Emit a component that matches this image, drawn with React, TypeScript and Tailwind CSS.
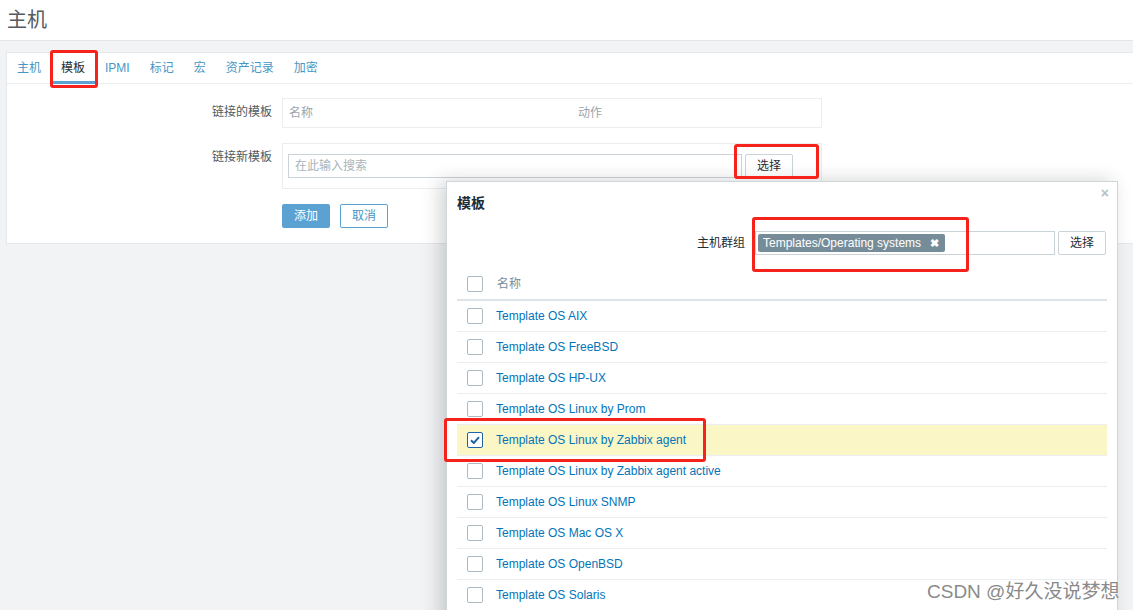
import React from 'react';

const FONT = { fontFamily: '"Liberation Sans", Arial, "Noto Sans CJK SC", sans-serif' };

const TABS = ['主机', '模板', 'IPMI', '标记', '宏', '资产记录', '加密'];

const TEMPLATES = [
  'Template OS AIX',
  'Template OS FreeBSD',
  'Template OS HP-UX',
  'Template OS Linux by Prom',
  'Template OS Linux by Zabbix agent',
  'Template OS Linux by Zabbix agent active',
  'Template OS Linux SNMP',
  'Template OS Mac OS X',
  'Template OS OpenBSD',
  'Template OS Solaris',
];

const Checkbox: React.FC<{ checked?: boolean }> = ({ checked }) => (
  <div
    className={`w-[16px] h-[16px] rounded-[2px] border bg-white flex items-center justify-center ${
      checked ? 'border-[#1f65a6]' : 'border-[#acbbc2]'
    }`}
  >
    {checked && (
      <svg width="10" height="8" viewBox="0 0 10 8">
        <path d="M1 4.2 L3.8 7 L9 1.2" fill="none" stroke="#1f65a6" strokeWidth="2" />
      </svg>
    )}
  </div>
);

const Annot: React.FC<{ className: string }> = ({ className }) => (
  <div className={`absolute border-[3px] border-[#f5231b] rounded-[3px] pointer-events-none ${className}`} />
);

const App: React.FC = () => {
  return (
    <div className="relative w-[1133px] h-[610px] overflow-hidden bg-[#f2f3f5] text-[12px] text-[#1f2c33]" style={FONT}>
      {/* Page header */}
      <div className="h-[41px] bg-white border-b border-[#e4e7ea] flex items-center pl-[7px]">
        <h1 className="text-[20px] text-[#555b60] font-normal leading-none">主机</h1>
      </div>

      {/* Main card */}
      <div className="mt-[11px] ml-[6px] w-[1140px] bg-white border border-[#e4e8eb] pb-[15px]">
        <div className="flex h-[31px] border-b border-[#ebeef0]">
          {TABS.map((t, i) => (
            <div
              key={t}
              className={`px-[10px] flex items-center relative ${i === 1 ? 'text-[#1f2c33]' : 'text-[#4796c4]'}`}
            >
              {t}
              {i === 1 && <div className="absolute left-[2px] right-0 bottom-[-1px] h-[3px] bg-[#5ba2d3]" />}
            </div>
          ))}
        </div>

        <div className="pt-[14px] flex flex-col gap-[15px]">
          <div className="flex">
            <div className="w-[275px] pr-[10px] text-right pt-[5px] text-[#4f5b62]">链接的模板</div>
            <div className="w-[540px] h-[30px] border border-[#ebeef0] flex items-center text-[#9aa5ab]">
              <span className="pl-[6px] w-[295px]">名称</span>
              <span>动作</span>
            </div>
          </div>

          <div className="flex">
            <div className="w-[275px] pr-[10px] text-right pt-[5px] text-[#4f5b62]">链接新模板</div>
            <div className="w-[540px] h-[46px] border border-[#ebeef0] flex items-center pl-[5px] gap-[3px]">
              <div className="w-[454px] h-[24px] border border-[#cad3d8] flex items-center pl-[6px] text-[#aab4b9]">
                在此输入搜索
              </div>
              <div className="w-[48px] h-[24px] border border-[#cad3d8] rounded-[2px] flex items-center justify-center text-[#1f2c33]">
                选择
              </div>
            </div>
          </div>

          <div className="flex pl-[275px] gap-[10px]">
            <div className="w-[48px] h-[24px] rounded-[2px] bg-[#5ba2d3] text-white flex items-center justify-center">添加</div>
            <div className="w-[48px] h-[24px] rounded-[2px] border border-[#5ba2d3] text-[#4796c4] flex items-center justify-center">取消</div>
          </div>
        </div>
      </div>

      {/* Dialog */}
      <div className="absolute left-[446px] top-[181px] w-[672px] h-[460px] bg-white border border-[#cfd6da] shadow-[-6px_0_18px_rgba(0,0,0,0.18)] px-[10px]">
        <div className="absolute right-[8px] top-[4px] text-[#b7c1c6] text-[14px] font-bold leading-none">×</div>
        <div className="pt-[11px] text-[14px] text-[#1f2c33] font-semibold">模板</div>

        <div className="mt-[17px] flex items-center justify-end pr-[1px]">
          <span className="mr-[10px] text-[#1f2c33]">主机群组</span>
          <div className="w-[300px] h-[24px] border border-[#cad3d8] flex items-center pl-[2px]">
            <div className="h-[18px] bg-[#768d99] text-white rounded-[2px] flex items-center pl-[5px] pr-[6px] gap-[9px]">
              <span>Templates/Operating systems</span>
              <span className="text-[11px] font-bold">✖</span>
            </div>
          </div>
          <div className="ml-[3px] w-[48px] h-[24px] border border-[#cad3d8] rounded-[2px] flex items-center justify-center">选择</div>
        </div>

        <div className="mt-[13px] w-[650px]">
          <div className="h-[33px] flex items-center border-b-2 border-[#dde3e6] pl-[10px]">
            <Checkbox />
            <span className="ml-[14px] text-[#768d99]">名称</span>
          </div>
          {TEMPLATES.map((t, i) => (
            <div
              key={t}
              className={`h-[31px] flex items-center border-b border-[#ebeef0] pl-[10px] ${i === 4 ? 'bg-[#fbf6c6]' : ''}`}
            >
              <Checkbox checked={i === 4} />
              <span className="ml-[13px] text-[#0275b8]">{t}</span>
            </div>
          ))}
        </div>
      </div>

      {/* Screenshot annotations */}
      <Annot className="left-[50px] top-[50px] w-[48px] h-[38px]" />
      <Annot className="left-[734px] top-[144px] w-[85px] h-[35px]" />
      <Annot className="left-[752px] top-[217px] w-[217px] h-[55px]" />
      <Annot className="left-[444px] top-[418px] w-[262px] h-[44px]" />

      {/* Watermark */}
      <div
        className="absolute left-[927px] top-[578px] text-[19px] text-[#8a8a8a] whitespace-nowrap"
        style={{ textShadow: '0 0 2px #fff' }}
      >
        CSDN @好久没说梦想
      </div>
    </div>
  );
};

export default App;
